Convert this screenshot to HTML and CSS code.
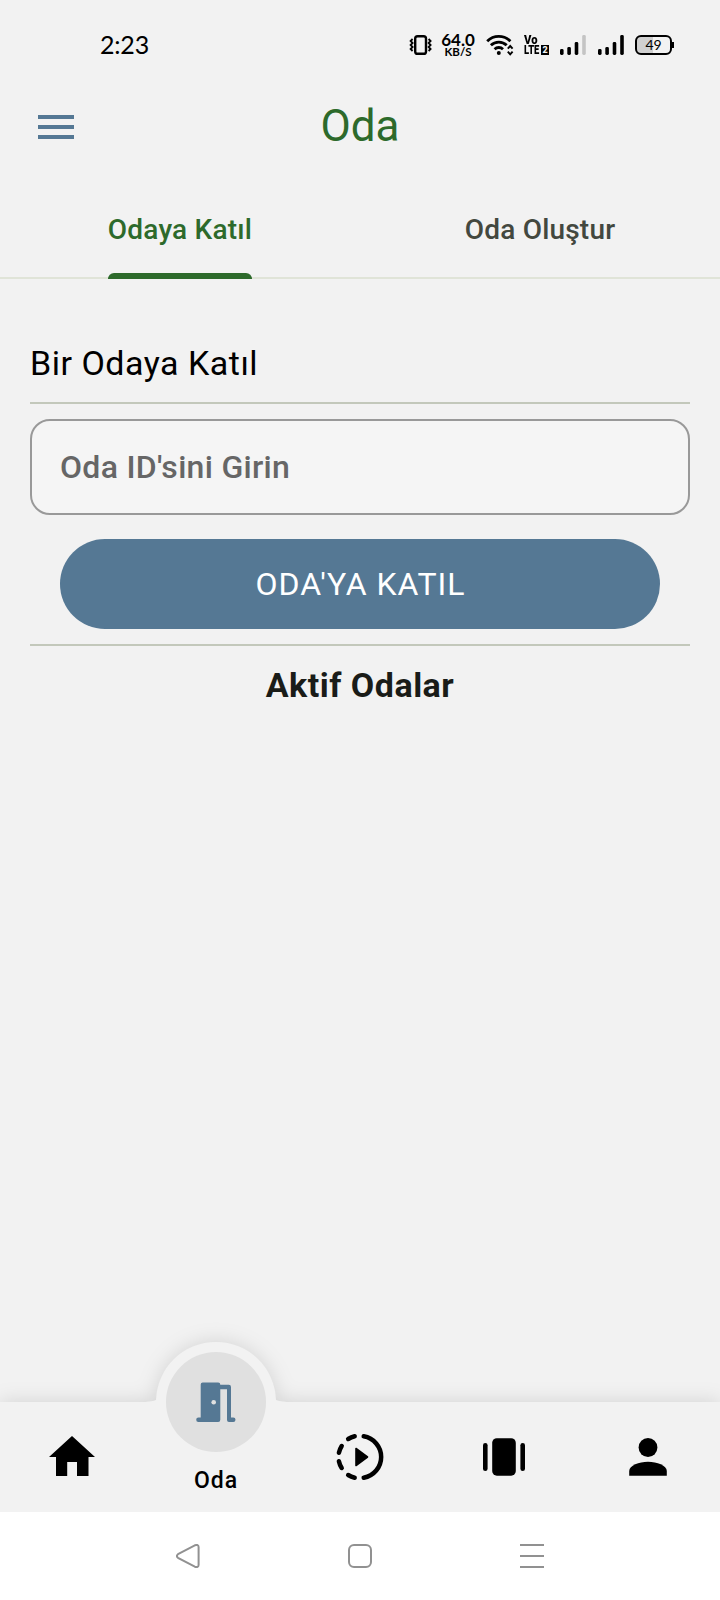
FILE: index.html
```html
<!DOCTYPE html>
<html lang="tr">
<head>
    <meta charset="UTF-8">
    <meta name="viewport" content="width=device-width, initial-scale=1.0">
    <title>Oda</title>
    <link rel="stylesheet" href="styles.css">
</head>
<body>
    <div class="status-bar">
        <span class="clock">2:23</span>
        <div class="status-icons">
            <svg class="vibrate" width="24" height="22" viewBox="0 0 24 22">
                <rect x="6.2" y="2.2" width="10.8" height="17.6" rx="2.4" fill="none" stroke="#000" stroke-width="2.4"/>
                <path d="M3.6 5L1.6 7l2 2-2 2 2 2-2 2 2 2M19.6 5l2 2-2 2 2 2-2 2 2 2-2 2" fill="none" stroke="#000" stroke-width="1.8"/>
            </svg>
            <div class="speed">
                <span class="speed-value">64.0</span>
                <span class="speed-unit">KB/S</span>
            </div>
            <svg class="wifi" width="28" height="22" viewBox="0 0 28 22">
                <g fill="none" stroke="#000" stroke-width="2.8">
                    <path d="M1.2 7.2a16.5 16.5 0 0 1 23.2 0"/>
                    <path d="M4.9 11.3a11.2 11.2 0 0 1 15.8 0"/>
                    <path d="M8.6 15.2a6 6 0 0 1 8.4 0"/>
                </g>
                <circle cx="12.8" cy="19" r="2"/>
                <path d="M21.8 14.7l2.4-2.7 2.4 2.7M21.8 17.6l2.4 2.7 2.4-2.7" fill="none" stroke="#000" stroke-width="1.9"/>
            </svg>
            <div class="volte">
                <span class="vo">Vo</span>
                <div class="lte-row"><span class="lte">LTE</span><b>2</b></div>
            </div>
            <svg class="signal" width="27" height="20" viewBox="0 0 27 20">
                <rect x="0" y="14" width="3.6" height="6" rx="1.4"/>
                <rect x="7.3" y="12" width="3.6" height="8" rx="1.4"/>
                <rect x="14.7" y="7" width="3.6" height="13" rx="1.4"/>
                <rect x="22.2" y="0" width="3.6" height="20" rx="1.4" fill="#c4c4c4"/>
            </svg>
            <svg class="signal" width="27" height="20" viewBox="0 0 27 20">
                <rect x="0" y="14" width="3.6" height="6" rx="1.4"/>
                <rect x="7.3" y="12" width="3.6" height="8" rx="1.4"/>
                <rect x="14.7" y="7" width="3.6" height="13" rx="1.4"/>
                <rect x="22.2" y="0" width="3.6" height="20" rx="1.4"/>
            </svg>
            <div class="battery">49</div>
        </div>
    </div>

    <header class="app-bar">
        <button class="menu-btn" aria-label="Menü"><i></i><i></i><i></i></button>
        <h1>Oda</h1>
    </header>

    <nav class="tabs">
        <a class="tab active"><span>Odaya Katıl</span></a>
        <a class="tab"><span>Oda Oluştur</span></a>
    </nav>

    <main class="content">
        <h2 class="join-title">Bir Odaya Katıl</h2>
        <input class="room-input" type="text" placeholder="Oda ID'sini Girin">
        <button class="join-btn">ODA'YA KATIL</button>
        <h2 class="active-title">Aktif Odalar</h2>
    </main>

    <nav class="bottom-nav">
        <!-- bar with the bump around the selected item -->
        <svg class="nav-shape" width="720" height="182" viewBox="0 0 720 182">
            <path d="M0 72H141Q150 72 156.03 70A60 60 0 0 1 275.97 70Q282 72 291 72H720V182H0Z" fill="#f2f2f2"/>
        </svg>
        <a class="nav-item">
            <svg width="48" height="48" viewBox="0 0 48 48">
                <path d="M24 3L47 24H40.5V43H29V29H19.2V43H8V24H1Z"/>
            </svg>
        </a>
        <a class="nav-item selected">
            <span class="bubble">
                <svg width="40" height="40" viewBox="0 0 40 40" fill="#557894">
                    <path d="M6.7 .5H22.2Q24.3 .5 24.3 2.7H32.8Q35 2.7 35 4.9V35.5H37.3A2.2 2.2 0 0 1 37.3 39.9H33Q31 39.9 31 37.9V7.3H24.3V37.7Q24.3 39.9 22.2 39.9H2.4A2.2 2.2 0 0 1 2.4 35.5H4.7V2.5Q4.7 .5 6.7 .5Z"/>
                    <circle cx="17.7" cy="20.3" r="2.3" fill="#e0e0e0"/>
                </svg>
            </span>
            <span class="nav-label">Oda</span>
        </a>
        <a class="nav-item">
            <svg width="48" height="48" viewBox="0 0 48 48" fill="none" stroke="#000" stroke-width="4.5" stroke-linecap="round">
                <path d="M27.7 3.3A21 21 0 0 1 27.7 44.7"/>
                <path d="M18.7 3.3A21 21 0 0 0 12.2 6M5.7 13A21 21 0 0 0 2.9 19.8M2.9 28.2A21 21 0 0 0 5.7 35M12.2 42A21 21 0 0 0 18.7 44.7"/>
                <path d="M20 15.5L31.5 24 20 32.5Z" fill="#000" stroke-width="1.6" stroke-linejoin="round"/>
            </svg>
        </a>
        <a class="nav-item">
            <svg width="48" height="48" viewBox="0 0 48 48">
                <rect x="3" y="10" width="4.6" height="28" rx="2.3"/>
                <rect x="12.2" y="5.2" width="23.6" height="37.5" rx="4.6"/>
                <rect x="40.4" y="10" width="4.6" height="28" rx="2.3"/>
            </svg>
        </a>
        <a class="nav-item">
            <svg width="48" height="48" viewBox="0 0 48 48">
                <circle cx="24" cy="14.5" r="9.4"/>
                <path d="M5.2 42.7V38C5.2 32.5 15 28.7 24 28.7S42.8 32.5 42.8 38V42.7Z"/>
            </svg>
        </a>
    </nav>

    <div class="system-nav">
        <svg width="24" height="24" viewBox="0 0 24 24">
            <path d="M2 10.2L18.8 1.3Q22.4 0 22.6 3V21Q22.4 24 18.8 22.7L2 13.8Q-.2 12 2 10.2Z"/>
        </svg>
        <svg width="24" height="24" viewBox="0 0 24 24">
            <rect x="1" y="1" width="22" height="22" rx="5"/>
        </svg>
        <svg width="24" height="24" viewBox="0 0 24 24">
            <path d="M0 1H24M0 12H24M0 23H24"/>
        </svg>
    </div>
</body>
</html>
```
FILE: styles.css
```css
* {
    box-sizing: border-box;
}
body {
    margin: 0;
    height: 1600px;
    display: flex;
    flex-direction: column;
    font-family: Roboto, sans-serif;
    background-color: #f2f2f2;
    color: #000;
    overflow: hidden;
}
h1, h2 {
    margin: 0;
    font-weight: 400;
}
button {
    border: none;
    padding: 0;
    cursor: pointer;
}
svg {
    display: block;
    flex: none;
}

/* Status bar */
.status-bar {
    height: 90px;
    padding: 0 48px 0 100px;
    display: flex;
    align-items: center;
    justify-content: space-between;
}
.clock {
    padding-bottom: 2px;
    font-family: Lato, sans-serif;
    font-size: 25px;
    letter-spacing: -0.2px;
}
.status-icons {
    display: flex;
    align-items: center;
}
.speed {
    width: 36px;
    margin-left: 7px;
    margin-right: 1px;
    display: flex;
    flex-direction: column;
    align-items: center;
    font-family: Lato, sans-serif;
    font-weight: 700;
}
.speed-value {
    font-size: 17px;
    line-height: 13px;
}
.speed-unit {
    font-size: 11.5px;
    line-height: 11px;
}
.wifi {
    margin-left: 9px;
}
.volte {
    width: 25px;
    margin-left: 10px;
    font-size: 12.5px;
    font-weight: 900;
    line-height: 10px;
}
.vo, .lte {
    display: block;
    width: 17px;
    transform: scaleX(0.75);
    transform-origin: left;
}
.vo {
    transform: scaleX(0.9);
}
.lte-row {
    display: flex;
}
.volte b {
    width: 8px;
    height: 10px;
    background-color: #000;
    color: #f2f2f2;
    font-size: 9px;
    text-align: center;
}
.signal {
    margin-left: 11px;
}
.battery {
    position: relative;
    width: 37px;
    height: 20px;
    margin-left: 10px;
    border: 2px solid #000;
    border-radius: 6px;
    background: linear-gradient(to right, #d0d0d0 50%, #f2f2f2 50%);
    font-family: Lato, sans-serif;
    font-size: 14px;
    line-height: 15px;
    text-align: center;
}
.battery::after {
    content: "";
    position: absolute;
    right: -4px;
    top: 5px;
    width: 2px;
    height: 6px;
    background-color: #000;
}

/* App bar */
.app-bar {
    height: 74px;
    padding: 0 38px;
    display: grid;
    grid-template-columns: 36px 1fr 36px;
    align-items: center;
}
.menu-btn {
    display: flex;
    flex-direction: column;
    gap: 6px;
    background: none;
}
.menu-btn i {
    width: 36px;
    height: 4px;
    background-color: #557894;
}
.app-bar h1 {
    padding-bottom: 2px;
    color: #2d6a2b;
    font-size: 44px;
    line-height: 72px;
    text-align: center;
}

/* Tabs */
.tabs {
    height: 115px;
    display: flex;
    border-bottom: 2px solid #e0e4d8;
}
.tab {
    flex: 1;
    display: flex;
    justify-content: center;
    color: #43483f;
    font-size: 28px;
    font-weight: 500;
    letter-spacing: 0.2px;
}
.tab span {
    position: relative;
    line-height: 132px;
}
.tab.active {
    color: #2d6a2b;
}
.tab.active span::after {
    content: "";
    position: absolute;
    left: 0;
    right: 0;
    top: 109px;
    height: 6px;
    border-radius: 6px 6px 0 0;
    background-color: #2d6a2b;
}

/* Content */
.content {
    flex: 1;
    padding: 55px 30px 0;
}
.join-title {
    height: 70px;
    border-bottom: 2px solid #c3c8bb;
    font-size: 34px;
    line-height: 59px;
    letter-spacing: 0.5px;
}
.room-input {
    display: block;
    width: 100%;
    height: 96px;
    margin-top: 15px;
    padding: 0 28px;
    border: 2px solid #999;
    border-radius: 20px;
    background-color: #f5f5f5;
    font-family: inherit;
    font-size: 32px;
    font-weight: 500;
    letter-spacing: 0.3px;
}
.room-input::placeholder {
    color: #666;
}
.join-btn {
    display: block;
    width: 600px;
    height: 90px;
    margin: 24px auto 15px;
    padding-left: 1px;
    border-radius: 45px;
    background-color: #557894;
    color: #fff;
    font-family: inherit;
    font-size: 32px;
    letter-spacing: 1px;
}
.active-title {
    border-top: 2px solid #c3c8bb;
    color: #1a1c18;
    font-size: 34px;
    font-weight: 700;
    line-height: 78px;
    letter-spacing: 0.5px;
    text-align: center;
}

/* Bottom navigation */
.bottom-nav {
    position: relative;
    height: 110px;
    display: flex;
}
.nav-shape {
    position: absolute;
    left: 0;
    bottom: 0;
    overflow: visible;
    filter: drop-shadow(0 0 10px rgba(0, 0, 0, 0.13));
}
.nav-item {
    position: relative;
    flex: 1;
    display: flex;
    align-items: center;
    justify-content: center;
}
.selected {
    flex-direction: column;
    justify-content: flex-start;
}
.bubble {
    width: 100px;
    height: 100px;
    margin-top: -50px;
    display: flex;
    flex: none;
    align-items: center;
    justify-content: center;
    border-radius: 50%;
    background-color: #e0e0e0;
}
.nav-label {
    font-size: 23px;
    font-weight: 500;
    line-height: 58px;
    letter-spacing: 0.9px;
}

/* System navigation */
.system-nav {
    position: relative;
    height: 88px;
    display: flex;
    align-items: center;
    justify-content: center;
    gap: 148px;
    background-color: #fff;
}
.system-nav svg {
    fill: none;
    stroke: #919191;
    stroke-width: 2;
}
```
